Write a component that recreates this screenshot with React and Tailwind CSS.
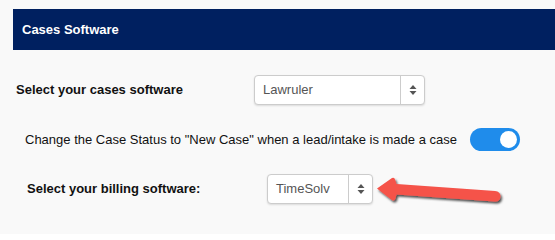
import React from "react";

function Chevrons() {
  return (
    <svg width="8" height="12" viewBox="0 0 8 12">
      <path d="M4 1 L7.5 5 H0.5 Z" fill="#555" />
      <path d="M4 11 L7.5 7 H0.5 Z" fill="#555" />
    </svg>
  );
}

function Select({ value, w, textW }) {
  return (
    <div
      className="flex h-[30px] rounded-[4px] border border-[#cccccc] bg-white shadow-[0_1px_2px_rgba(0,0,0,0.12)]"
      style={{ width: w }}
    >
      <div className="flex items-center pl-[8px] text-[13px] text-[#555555]" style={{ width: textW }}>
        {value}
      </div>
      <div className="flex flex-1 items-center justify-center border-l border-[#cccccc]">
        <Chevrons />
      </div>
    </div>
  );
}

export default function App() {
  return (
    <div
      className="relative h-[234px] w-[555px] overflow-hidden bg-[#f9f9f9] pt-[9px]"
      style={{ fontFamily: '"Liberation Sans", Arial, sans-serif' }}
    >
      <div className="ml-[13px] flex h-[41px] items-center bg-[#002060] pl-[9px] text-[13px] font-bold text-white">
        Cases Software
      </div>

      <div className="mt-[25px] flex items-center pl-[16px]">
        <div className="w-[238px] text-[13px] font-bold text-[#111]">Select your cases software</div>
        <Select value="Lawruler" w={171} textW={145} />
      </div>

      <div className="mt-[23px] flex items-center pl-[25px]">
        <div className="w-[445px] text-[13px] text-[#111]">
          Change the Case Status to "New Case" when a lead/intake is made a case
        </div>
        <div className="relative h-[23px] w-[50px] rounded-full bg-[#1f8ceb]">
          <div className="absolute right-[3px] top-[3px] h-[17px] w-[17px] rounded-full bg-white" />
        </div>
      </div>

      <div className="mt-[23px] flex items-center pl-[27px]">
        <div className="w-[240px] text-[13px] font-bold text-[#111]">Select your billing software:</div>
        <Select value="TimeSolv" w={106} textW={80} />
      </div>

      <svg className="absolute left-0 top-0" width="555" height="234" viewBox="0 0 555 234">
        <defs>
          <filter id="sh" x="-20%" y="-50%" width="140%" height="200%">
            <feDropShadow dx="1.5" dy="2" stdDeviation="1.3" floodColor="#000" floodOpacity="0.7" />
          </filter>
        </defs>
        <g filter="url(#sh)">
          <path
            d="M377 188.5 L392 178 Q394.5 177 395 179.5 L396.5 184 L495 191 Q500.5 191.5 500.5 196.5 Q500 202 494.5 201.5 L396.5 194.5 L395.5 198.5 Q395 201 392.5 200.5 Z"
            fill="#f5524a"
          />
        </g>
      </svg>
    </div>
  );
}
